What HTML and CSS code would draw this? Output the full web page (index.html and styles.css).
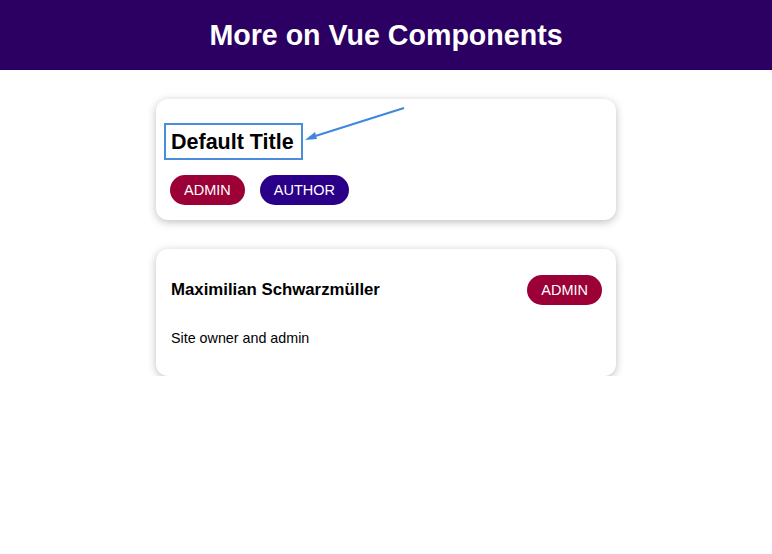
FILE: index.html
```html
<!DOCTYPE html>
<html lang="en">
<head>
<meta charset="utf-8">
<title>More on Vue Components</title>
<link rel="stylesheet" href="styles.css">
</head>
<body>
<header class="app-header">
  <h1 class="app-title">More on Vue Components</h1>
</header>
<main class="content">
  <section class="card card--info">
    <svg class="annotation" width="460" height="120" viewBox="0 0 460 120" aria-hidden="true">
      <line x1="248" y1="9" x2="153" y2="39" stroke="#3f86dc" stroke-width="2"/>
      <polygon points="149,41 159,33 161,40" fill="#3f86dc"/>
    </svg>
    <h2 class="info-title">Default Title</h2>
    <div class="badge-list">
      <span class="badge badge--admin">ADMIN</span>
      <span class="badge badge--author">AUTHOR</span>
    </div>
  </section>
  <section class="card card--user">
    <div class="user-header">
      <h3 class="user-name">Maximilian Schwarzmüller</h3>
      <span class="badge badge--admin">ADMIN</span>
    </div>
    <p class="user-info">Site owner and admin</p>
  </section>
</main>
</body>
</html>
```
FILE: styles.css
```css
* { box-sizing: border-box; }
html, body { margin: 0; padding: 0; }
body {
  font-family: "Liberation Sans", Arial, sans-serif;
  background: #ffffff;
  color: #000;
}
.app-header {
  height: 70px;
  background: #2b0062;
  display: flex;
  align-items: center;
  justify-content: center;
}
.app-title {
  margin: 0;
  color: #ffffff;
  font-size: 28.6px;
  font-weight: bold;
}
.content {
  display: flex;
  flex-direction: column;
  align-items: center;
  gap: 29px;
  padding-top: 29px;
}
.card {
  position: relative;
  width: 460px;
  background: #fff;
  border-radius: 12px;
  box-shadow: 0 2px 8px rgba(0, 0, 0, 0.26);
  padding: 14px 14px 15px 15px;
}
.annotation {
  position: absolute;
  left: 0;
  top: 0;
  pointer-events: none;
}
.info-title {
  position: relative;
  display: inline-block;
  margin: 17px 0 21px 0;
  font-size: 21.5px;
  line-height: 24px;
  font-weight: bold;
}
.info-title::after {
  content: "";
  position: absolute;
  top: -7px;
  left: -7px;
  right: -9px;
  bottom: -6px;
  border: 2px solid #4a8edb;
}
.badge-list {
  display: flex;
  gap: 15px;
}
.badge {
  display: inline-block;
  height: 30px;
  line-height: 30px;
  padding: 0 14px;
  border-radius: 15px;
  font-size: 14.5px;
  color: #fff;
}
.card--info .badge:first-child { margin-left: -1px; }
.badge--admin { background: #9b0036; }
.badge--author { background: #2b0089; }
.user-header {
  display: flex;
  justify-content: space-between;
  align-items: center;
  margin-top: 12px;
}
.user-name {
  margin: 0;
  font-size: 16.8px;
  font-weight: bold;
}
.user-info {
  margin: 25px 0 14px 0;
  font-size: 14.3px;
  line-height: 17px;
}
```
